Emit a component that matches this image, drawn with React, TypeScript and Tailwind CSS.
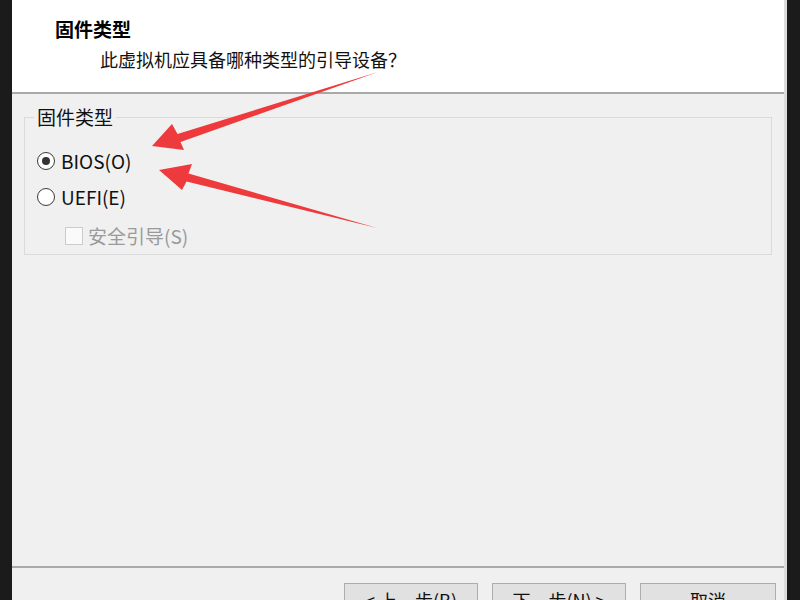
import React from "react";

const FONT = "font-['Noto_Sans_CJK_SC','Noto_Sans',sans-serif]";

// Two hand-drawn red annotation arrows pointing at the BIOS option
function Arrows() {
  return (
    <svg
      className="pointer-events-none absolute left-0 top-0"
      width={800}
      height={600}
      viewBox="0 0 800 600"
    >
      <polygon
        fill="#ee3a3c"
        points="378,72 180.5,142 184,150 152,146 172,124 177.5,134"
      />
      <polygon
        fill="#ee3a3c"
        points="377,228 186.5,181.5 182,190 159,170 192,164 188.5,173.5"
      />
    </svg>
  );
}

function Radio({ checked, label }: { checked?: boolean; label: string }) {
  return (
    <div className="flex h-[24px] items-center gap-[6px]">
      <span className="flex h-[18px] w-[18px] items-center justify-center rounded-full border border-[#3a3a3a] bg-white">
        {checked && <span className="h-[8px] w-[8px] rounded-full bg-[#333]" />}
      </span>
      <span className="text-[19px] leading-[24px] text-[#111]">{label}</span>
    </div>
  );
}

export default function App() {
  return (
    <div className={`relative flex h-[600px] w-[800px] overflow-hidden bg-[#1b1b1b] ${FONT}`}>
      <div className="w-[12px] shrink-0 bg-[#1b1b1b]" />

      <div className="flex w-[775px] shrink-0 flex-col border-r-[3px] border-[#dcdcdc] bg-[#f0f0f0]">
        {/* Header */}
        <div className="h-[94px] shrink-0 border-b-2 border-[#a9a9a9] bg-white">
          <div className="pl-[43px] pt-[17px] text-[19px] font-bold leading-[24px] text-black">
            固件类型
          </div>
          <div className="pl-[88px] pt-[6px] text-[18px] leading-[24px] text-[#111]">
            此虚拟机应具备哪种类型的引导设备？
          </div>
        </div>

        {/* Body */}
        <div className="flex-1 px-[12px] pt-[11px]">
          <fieldset className="h-[150px] border border-[#dadada]">
            <legend className="ml-[9px] px-[3px] text-[19px] leading-[24px] text-[#111]">
              固件类型
            </legend>
            <div className="flex flex-col pl-[12px] pt-[20px]">
              <Radio checked label="BIOS(O)" />
              <div className="mt-[12px]">
                <Radio label="UEFI(E)" />
              </div>
              <div className="mt-[15px] flex h-[24px] items-center gap-[5px] pl-[28px]">
                <span className="h-[18px] w-[18px] border border-[#cccccc] bg-[#fafafa]" />
                <span className="text-[19px] leading-[24px] text-[#9a9a9a]">安全引导(S)</span>
              </div>
            </div>
          </fieldset>
        </div>

        {/* Footer */}
        <div className="h-[34px] shrink-0 border-t-2 border-[#a9a9a9]">
          <div className="flex justify-end gap-[14px] pr-[8px] pt-[15px]">
            <button className="h-[34px] w-[134px] border border-[#adadad] bg-[#e1e1e1] text-[18px] leading-[24px] text-[#111]">
              &lt; 上一步(B)
            </button>
            <button className="h-[34px] w-[134px] border border-[#adadad] bg-[#e1e1e1] text-[18px] leading-[24px] text-[#111]">
              下一步(N) &gt;
            </button>
            <button className="h-[34px] w-[136px] border border-[#adadad] bg-[#e1e1e1] text-[18px] leading-[24px] text-[#111]">
              取消
            </button>
          </div>
        </div>
      </div>

      <div className="flex-1 bg-[#1b1b1b]" />

      <Arrows />
    </div>
  );
}
